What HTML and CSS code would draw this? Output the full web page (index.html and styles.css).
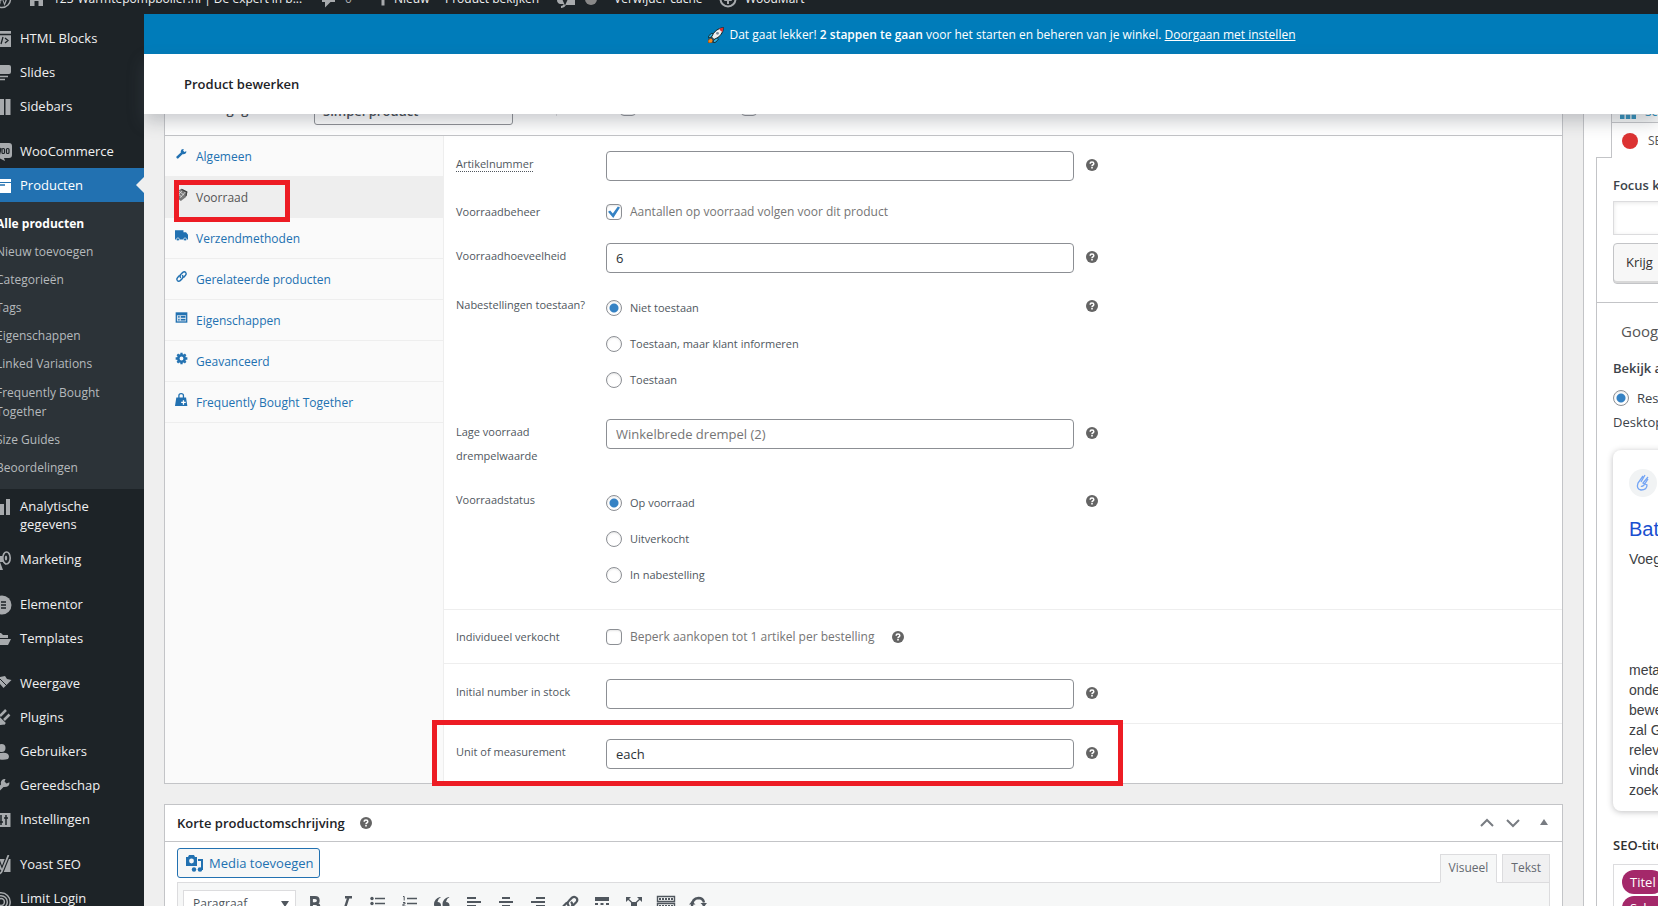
FILE: index.html
```html
<!DOCTYPE html>
<html lang="nl">
<head>
<meta charset="utf-8">
<title>Product bewerken</title>
<link rel="stylesheet" href="styles.css">
</head>
<body>
<svg class="defs" aria-hidden="true">
  <symbol id="help" viewBox="0 0 12 12"><circle cx="6" cy="6" r="6" fill="#646464"/><path d="M4.2 4.7Q4.2 3 6 3t1.8 1.6Q7.800 5.500 6.800 6 6 6.400 6 7.200" fill="none" stroke="#fff" stroke-width="1.500"/><rect x="5.200" y="8" width="1.600" height="1.500" fill="#fff"/></symbol>
  <symbol id="wrench" viewBox="0 0 20 20"><path d="M17 6.500 14.500 7.500 12.500 5.500 13.500 3Q9.500 2.500 8.800 6.500L9 8.500 2 15Q1.500 17.500 4.500 18L11.500 11Q17.500 11.500 17.500 6.500Z" fill="currentColor"/></symbol>
  <symbol id="link" viewBox="0 0 20 20"><g fill="none" stroke="currentColor" stroke-width="2.200" stroke-linecap="round"><path d="M8.500 11.500Q6.500 9 9 6.700L12 3.700Q14.500 1.800 16.500 4 18.200 6 16.200 8.200L13.500 11"/><path d="M11.500 8.500Q13.500 11 11 13.300L8 16.300Q5.500 18.200 3.500 16 1.800 14 3.800 11.800L6.500 9"/></g></symbol>
</svg>

<header class="adminbar">
  <a class="ab-logo" href="#" aria-label="WordPress"><svg width="12" height="20" viewBox="8 0 12 20"><circle cx="10" cy="10" r="8.500" fill="none" stroke="#a7aaad" stroke-width="1.500"/><path d="M3 6l4.500 11L10 10l2.500 7L17 6l-2 0-2.500 8L9.500 6H6l3 8Z" fill="#a7aaad"/></svg></a>
  <a class="ab-site" href="#"><svg width="13" height="20" viewBox="0 0 13 20"><path d="M0 2h13v15H8.500v-5h-4v5H0Z" fill="#a7aaad"/></svg>123-Warmtepompboiler.nl | De expert in b...</a>
  <a class="ab-comments" href="#"><svg width="13" height="20" viewBox="0 0 13 20"><path d="M0 3h13v10H8.500L3 18.500V13H0Z" fill="#a7aaad"/></svg><span>0</span></a>
  <a class="ab-new" href="#"><svg width="10" height="20" viewBox="0 0 10 20"><path d="M3.500 3h3v4H10v3H6.500v6.500h-3V10H0V7h3.500Z" fill="#a7aaad"/></svg>Nieuw</a>
  <a class="ab-view" href="#">Product bekijken</a>
  <a class="ab-yoast" href="#" aria-label="Yoast SEO"><svg width="18" height="20" viewBox="0 0 18 20"><path d="M0 4h18v12H9q-2 3.500-5 3v-2q2 0 2.800-2H3q-3-1-3-4Z" fill="#a7aaad"/><path d="M4 5l4 9 5-11" fill="none" stroke="#1d2327" stroke-width="2"/></svg><i></i></a>
  <a class="ab-cache" href="#">Verwijder cache</a>
  <a class="ab-wood" href="#"><svg width="18" height="20" viewBox="0 0 18 20"><circle cx="9" cy="10" r="7.500" fill="none" stroke="#a7aaad" stroke-width="2"/><path d="M9 3l4 9h-3v3H8v-3H5Z" fill="#a7aaad"/></svg>WoodMart</a>
</header>

<div class="shell">
  <nav class="menu">
    <a href="#"><svg viewBox="8 0 12 20"><path d="M1 2h18v16H1Z" fill="#a7aaad"/><path d="M1 5.500h18M7 9l-3 2.500L7 14M11 8l-2 7M13 9l3 2.500-3 2.500" stroke="#1d2327" fill="none" stroke-width="1.300"/></svg>HTML Blocks</a>
    <a href="#"><svg viewBox="8 0 12 20"><rect x="2" y="2" width="17" height="9" rx="2" fill="#a7aaad"/><path d="M4 13.500h12M4 16.500h9" stroke="#a7aaad" stroke-width="1.500"/></svg>Slides</a>
    <a href="#"><svg viewBox="8 0 12 20"><path d="M2 2h10v16H2ZM13.500 2h5v16h-5Z" fill="#a7aaad"/></svg>Sidebars</a>
    <a class="after-gap" href="#"><svg viewBox="8 0 12 20"><path d="M0 4q0-3 3-3h14q3 0 3 3v9q0 3-3 3h-5l1 3-6-3H3q-3 0-3-3Z" fill="#a7aaad"/><path d="M3 6l1.500 6L6 8l1.500 4L9 6" stroke="#1d2327" fill="none" stroke-width="1.500"/><rect x="10" y="6.500" width="2.500" height="5" rx="1" stroke="#1d2327" fill="none" stroke-width="1.200"/><rect x="14.500" y="6.500" width="2.500" height="5" rx="1" stroke="#1d2327" fill="none" stroke-width="1.200"/></svg>WooCommerce</a>
    <a class="current" href="#"><svg viewBox="8 0 12 20"><path d="M1 3h18v3H1ZM1 7h18v10H1Z" fill="#fff"/><path d="M6 9h7" stroke="#2271b1" stroke-width="1.500"/></svg>Producten</a>
    <div class="submenu">
      <a class="on" href="#">Alle producten</a>
      <a href="#">Nieuw toevoegen</a>
      <a href="#">Categorieën</a>
      <a href="#">Tags</a>
      <a href="#">Eigenschappen</a>
      <a href="#">Linked Variations</a>
      <a class="two-line" href="#">Frequently Bought Together</a>
      <a href="#">Size Guides</a>
      <a href="#">Beoordelingen</a>
    </div>
    <a class="tall" href="#"><svg viewBox="8 0 12 20"><path d="M2 11h4v7H2ZM8 7h4v11H8ZM14 2h4v16h-4Z" fill="#a7aaad"/></svg>Analytische gegevens</a>
    <a href="#"><svg viewBox="8 0 12 20"><path d="M3 6h8l3-4v13l-3-3H8l3 8H8L5 12H3Z" fill="#a7aaad"/><ellipse cx="14.500" cy="8" rx="3.700" ry="6" fill="#1d2327" stroke="#a7aaad" stroke-width="1.600"/><ellipse cx="14" cy="8" rx="1.200" ry="2.500" fill="#a7aaad"/></svg>Marketing</a>
    <a class="after-gap" href="#"><svg viewBox="8 0 12 20"><circle cx="10" cy="10" r="9.500" fill="#a7aaad"/><path d="M9 7h5M9 10h5M9 13h5" stroke="#1d2327" stroke-width="1.500"/></svg>Elementor</a>
    <a href="#"><svg viewBox="8 0 12 20"><path d="M2 4h7l2 2h5v3H2ZM2 10h17l-3 6H3Z" fill="#a7aaad"/></svg>Templates</a>
    <a class="after-gap" href="#"><svg viewBox="8 0 12 20"><path d="M8 3l5-1 2 3 4.500 1-8 8-6-7Z" fill="#a7aaad"/><path d="M8 5l7 7" stroke="#1d2327"/></svg>Weergave</a>
    <a href="#"><svg viewBox="8 0 12 20"><path d="M6 9l7 7q-5 2-9 0Z" fill="#a7aaad"/><path d="M8 8l6-6M12 12l5.500-5.500M6 9l7 7" stroke="#a7aaad" stroke-width="2.500"/></svg>Plugins</a>
    <a href="#"><svg viewBox="8 0 12 20"><circle cx="9.500" cy="6" r="4" fill="#a7aaad"/><path d="M3 16q0-6 6-5 8-1 8 4l-1 2q-6 2-13-1Z" fill="#a7aaad"/></svg>Gebruikers</a>
    <a href="#"><svg viewBox="8 0 12 20" color="#a7aaad"><use href="#wrench" x="0" y="0" width="20" height="20"/></svg>Gereedschap</a>
    <a href="#"><svg viewBox="8 0 12 20"><path d="M2 3h16.500v14H2Z" fill="#a7aaad"/><path d="M9 5v10M14 5v10M7 12h4M12 8h4" stroke="#1d2327" stroke-width="1.500"/></svg>Instellingen</a>
    <a class="after-gap" href="#"><svg viewBox="8 0 12 20"><path d="M1 4h17.500v13H1Z" fill="#a7aaad"/><path d="M16.500 0 10 16q-1 3-4 3M6 6l3.500 9" stroke="#1d2327" fill="none" stroke-width="4"/><path d="M16.500 0 10 16q-1 3-4 3M6 6l3.500 9" stroke="#a7aaad" fill="none" stroke-width="1.800"/></svg>Yoast SEO</a>
    <a href="#"><svg viewBox="8 0 12 20"><g fill="none" stroke="#a7aaad" stroke-width="1.500"><circle cx="9" cy="13" r="9.200"/><circle cx="9" cy="13" r="6.300"/><circle cx="9" cy="13" r="3.400"/></g></svg>Limit Login</a>
  </nav>

  <main class="main">
    <p class="banner"><svg width="16" height="16" viewBox="0 0 16 16"><path d="M4 6 1 8.500 0 11l4-1 2 2-1 4 3-1 2.500-3Z" fill="#31b5e8" stroke="#122" stroke-width=".8"/><path d="M3 11l2 2-1 3H0v-3Z" fill="#f58a1f" stroke="#422" stroke-width=".6"/><path d="M3.500 10Q7 1.500 15.500.500 15 9 6 12.500Z" fill="#eee" stroke="#122"/><path d="M11 1.700 15.500.500 14.300 5Q12.500 4 11 1.700Z" fill="#e02b2b"/><circle cx="9.500" cy="6.300" r="1.400" fill="#789"/></svg><span>Dat gaat lekker! <strong>2 stappen te gaan</strong> voor het starten en beheren van je winkel. <a href="#">Doorgaan met instellen</a></span></p>
    <div class="titlebar"><h1>Product bewerken</h1></div>

    <div class="content">
      <div class="primary">
        <section class="box">
          <div class="data-head">
            <label for="ptype">Productgegevens —</label>
            <select id="ptype"><option>Simpel product</option></select>
            <i class="bar"></i>
            <label class="virt">Virtueel: <input type="checkbox"></label>
            <label class="down">Downloadbaar: <input type="checkbox"></label>
          </div>
          <div class="data-body">
            <nav class="tabs">
              <a href="#"><svg viewBox="0 0 20 20"><use href="#wrench"/></svg>Algemeen</a>
              <a class="active" href="#"><svg viewBox="0 0 20 20"><path d="M1 6l9-5 9 5-2 8-8 6-8-6Z" fill="#777"/><path d="M3 8l8 6M6 5l8 6M3 13l8-9M8 15l8-9" stroke="#ddd" stroke-width="1.300"/><path d="M10 2l8 4-1 6" fill="none" stroke="#444" stroke-width="2"/></svg>Voorraad<span class="mark mark-tab"></span></a>
              <a href="#"><svg viewBox="0 0 20 20"><path d="M0 2h13v3h4l3 4v7H0Z" fill="currentColor"/><circle cx="4.500" cy="16" r="2.300" fill="currentColor" stroke="#fafafa"/><circle cx="15.500" cy="16" r="2.300" fill="currentColor" stroke="#fafafa"/></svg>Verzendmethoden</a>
              <a href="#"><svg viewBox="0 0 20 20"><use href="#link"/></svg>Gerelateerde producten</a>
              <a href="#"><svg viewBox="0 0 20 20"><path d="M1 2h18v16H1Z" fill="currentColor"/><path d="M3 6.500h14V16H3Z" fill="#fafafa" opacity=".8"/><path d="M9 9h7M9 13.500h7M5 9h2M5 13.500h2" stroke="currentColor" stroke-width="2.500"/></svg>Eigenschappen</a>
              <a href="#"><svg viewBox="0 0 20 20"><circle cx="10" cy="10" r="5" fill="none" stroke="currentColor" stroke-width="4"/><path d="M10 1v3M10 16v3M1 10h3M16 10h3M3.600 3.600l2 2M14.400 14.400l2 2M3.600 16.400l2-2M14.400 5.600l2-2" stroke="currentColor" stroke-width="3.500"/></svg>Geavanceerd</a>
              <a href="#"><svg viewBox="0 0 20 20"><path d="M2 7h15l2 13H0Z" fill="currentColor"/><path d="M6 8V4q0-3 3.500-3T13 4v4" fill="none" stroke="currentColor" stroke-width="2"/><path d="M13 11v7M9.500 14.500h7" stroke="#fff" stroke-width="2"/></svg>Frequently Bought Together</a>
            </nav>
            <form class="fields">
              <div class="group first">
                <div class="row"><label for="sku"><abbr>Artikelnummer</abbr></label><div><input class="text" id="sku" type="text"><svg class="help"><use href="#help"/></svg></div></div>
                <div class="row check"><span class="lab">Voorraadbeheer</span><div><label><input type="checkbox" checked><span class="desc">Aantallen op voorraad volgen voor dit product</span></label></div></div>
                <div class="row"><label for="qty">Voorraadhoeveelheid</label><div><input class="text" id="qty" type="text" value="6"><svg class="help"><use href="#help"/></svg></div></div>
                <div class="row choices"><span class="lab">Nabestellingen toestaan?</span><div><div class="list">
                  <label><input type="radio" name="back" checked>Niet toestaan</label>
                  <label><input type="radio" name="back">Toestaan, maar klant informeren</label>
                  <label><input type="radio" name="back">Toestaan</label></div><svg class="help"><use href="#help"/></svg></div></div>
                <div class="row low"><label for="low">Lage voorraad drempelwaarde</label><div><input class="text" id="low" type="text" placeholder="Winkelbrede drempel (2)"><svg class="help"><use href="#help"/></svg></div></div>
                <div class="row choices"><span class="lab">Voorraadstatus</span><div><div class="list">
                  <label><input type="radio" name="status" checked>Op voorraad</label>
                  <label><input type="radio" name="status">Uitverkocht</label>
                  <label><input type="radio" name="status">In nabestelling</label></div><svg class="help"><use href="#help"/></svg></div></div>
              </div>
              <div class="group solo">
                <div class="row check"><span class="lab">Individueel verkocht</span><div><label><input type="checkbox"><span class="desc">Beperk aankopen tot 1 artikel per bestelling</span></label><svg class="help"><use href="#help"/></svg></div></div>
              </div>
              <div class="group one">
                <div class="row"><label for="init">Initial number in stock</label><div><input class="text" id="init" type="text"><svg class="help"><use href="#help"/></svg></div></div>
              </div>
              <div class="group one">
                <div class="row"><label for="unit">Unit of measurement</label><div><input class="text" id="unit" type="text" value="each"><svg class="help"><use href="#help"/></svg></div></div>
                <span class="mark mark-unit"></span>
              </div>
            </form>
          </div>
        </section>

        <section class="box">
          <div class="box-head">
            <h2>Korte productomschrijving</h2><svg class="help"><use href="#help"/></svg>
            <div class="handles">
              <button type="button" aria-label="Omhoog"><svg width="14" height="10" viewBox="0 0 14 10"><path d="M1 8l6-6 6 6" fill="none" stroke="#787c82" stroke-width="2"/></svg></button>
              <button type="button" aria-label="Omlaag"><svg width="14" height="10" viewBox="0 0 14 10"><path d="M1 2l6 6 6-6" fill="none" stroke="#787c82" stroke-width="2"/></svg></button>
              <button class="fold" type="button" aria-label="Inklappen"><svg width="8" height="10" viewBox="0 0 8 10"><path d="M4 1l4 6H0Z" fill="#787c82"/></svg></button>
            </div>
          </div>
          <div class="editor">
            <div class="editor-top">
              <button class="media" type="button"><svg width="17" height="17" viewBox="0 0 17 17"><path d="M0 2h2l1-2h5l1 2h2v9H0Z" fill="currentColor"/><circle cx="5.500" cy="6" r="2.400" fill="#f6f7f7"/><path d="M12 5h4v10" fill="none" stroke="currentColor" stroke-width="2"/><circle cx="14" cy="14.500" r="2.300" fill="currentColor"/><circle cx="8" cy="14.500" r="2.200" fill="currentColor"/></svg>Media toevoegen</button>
              <div class="modes"><button class="on" type="button">Visueel</button><button type="button">Tekst</button></div>
            </div>
            <div class="toolbar">
              <div class="format"><select aria-label="Opmaak"><option>Paragraaf</option></select></div>
              <button type="button" aria-label="Vet"><svg viewBox="0 0 20 20"><path d="M6 3.500h5q3.300 0 3.300 3T11 9.700H7.500M7.500 9.700H11q4 0 4 3.400T11 16.500H6M7.500 3v14" fill="none" stroke="currentColor" stroke-width="2.800"/></svg></button>
              <button type="button" aria-label="Cursief"><svg viewBox="0 0 20 20"><path d="M9 3.200h7M4 16.800h7M12.500 3 8 17" stroke="currentColor" stroke-width="2.400"/></svg></button>
              <button type="button" aria-label="Lijst"><svg viewBox="0 0 20 20"><path d="M7 4.500H17M7 9.500H17M7 14.500H17" stroke="currentColor" stroke-width="1.300"/><circle cx="4" cy="4.500" r="1.700" fill="currentColor"/><circle cx="4" cy="9.500" r="1.700" fill="currentColor"/></svg></button>
              <button type="button" aria-label="Genummerde lijst"><svg viewBox="0 0 20 20"><path d="M7 4.500H17M7 9.500H17M7 14.500H17" stroke="currentColor" stroke-width="1.300"/><path d="M3 2.500h1.200v4M3 8.500h2v1.500H3v2h2.500" fill="none" stroke="currentColor"/></svg></button>
              <button type="button" aria-label="Citaat"><svg viewBox="0 0 20 20"><path d="M9 3Q6 4.500 5.500 8 9 8 9 11.500 9 15 5.500 15 2 14.500 2 10 2.500 4.500 8 3ZM17.500 3Q14.500 4.500 14 8q3.500 0 3.500 3.500 0 3.500-3.500 3.500-3.500-.5-3.500-5 .5-5.500 6-7Z" fill="currentColor"/></svg></button>
              <button type="button" aria-label="Links"><svg viewBox="0 0 20 20"><path d="M3 4h9M3 8h14M3 12h9M3 16h14" stroke="currentColor" stroke-width="2"/></svg></button>
              <button type="button" aria-label="Midden"><svg viewBox="0 0 20 20"><path d="M6 4h8M3 8h14M6 12h8M3 16h14" stroke="currentColor" stroke-width="2"/></svg></button>
              <button type="button" aria-label="Rechts"><svg viewBox="0 0 20 20"><path d="M8 4h9M3 8h14M8 12h9M3 16h14" stroke="currentColor" stroke-width="2"/></svg></button>
              <button type="button" aria-label="Link"><svg viewBox="0 0 20 20"><use href="#link"/></svg></button>
              <button type="button" aria-label="Lees meer"><svg viewBox="0 0 20 20"><path d="M3 3h14v4H3ZM3 9h3v2H3ZM8.500 9h3v2h-3ZM14 9h3v2h-3ZM3 13h14v4H3Z" fill="currentColor"/></svg></button>
              <button type="button" aria-label="Volledig scherm"><svg viewBox="0 0 20 20"><path d="M7 8h6v5H7ZM2 3h5L2 8ZM18 3v5l-5-5ZM2 18v-5l5 5ZM18 18h-5l5-5Z" fill="currentColor"/><path d="M3 4l14 13M17 4 3 17" stroke="currentColor" stroke-width="1.300"/></svg></button>
              <button type="button" aria-label="Werkbalk"><svg viewBox="0 0 20 20"><path d="M1.500 2.500h17v5h-17ZM1.500 9.500h17v8h-17Z" fill="none" stroke="currentColor" stroke-width="1.400"/><path d="M3 5h14M3 12h14" stroke="currentColor" stroke-width="2" stroke-dasharray="2 1"/></svg></button>
              <button type="button" aria-label="Vernieuwen"><svg viewBox="0 0 20 20"><path d="M4 12Q4 4.500 10.500 4 15 4 16 8.500M16 10q0 6-6 6.500-4 0-6-3.500" fill="none" stroke="currentColor" stroke-width="2.400"/><path d="M1 10.500h6.500L4 7ZM12.500 9h6.500l-3 3.500Z" fill="currentColor"/></svg></button>
            </div>
          </div>
        </section>
      </div>

      <aside class="side">
        <div class="seo-tabs">
          <a class="schema" href="#"><svg width="16" height="14" viewBox="0 0 16 14"><path d="M0 0h4.500v14H0ZM5.800 0h4.500v14H5.800ZM11.500 0H16v14h-4.500Z" fill="#2b8cb8"/><path d="M0 9.200h16" stroke="#fff"/></svg>Schema</a>
          <a class="seo" href="#"><i></i>SEO</a>
        </div>
        <div class="seo-body">
          <div class="focus">
            <label for="focus">Focus k</label>
            <input id="focus" type="text">
            <button type="button">Krijg</button>
          </div>
          <div class="preview">
            <h3>Google</h3>
            <strong>Bekijk als</strong>
            <label><input type="radio" name="pv" checked>Resultaat</label>
            <span class="desktop">Desktop</span>
            <div class="card">
              <span class="favicon"><svg width="14" height="18" viewBox="0 0 14 18"><path d="M7 2 2 9q-2 6 3 7 6 0 6-5L7 9l5-6M9 1 5 8M12 5 8 11q-2 2-3 1" fill="none" stroke="#74a5f5" stroke-width="1.300"/></svg></span>
              <a href="#">Bat</a>
              <span class="date">Voeg</span>
              <p>meta<br>onde<br>bewe<br>zal G<br>relev<br>vinde<br>zoek</p>
            </div>
            <strong class="seo-title">SEO-titel</strong>
            <div class="pills"><span>Titel</span><span>Scheiding</span></div>
          </div>
        </div>
      </aside>
    </div>
  </main>
</div>
</body>
</html>
```
FILE: styles.css
```css
* { box-sizing: border-box; }
body {
  margin: 0;
  height: 100vh;
  overflow: hidden;
  display: flex;
  flex-direction: column;
  background: #efefef;
  color: #3c434a;
  font: 13px/18px "Open Sans", "Noto Sans", sans-serif;
}
h1, h2, h3, p { margin: 0; }
a { color: #2271b1; text-decoration: none; }
button, input, select { font: inherit; color: inherit; margin: 0; }
button { padding: 0; border: 0; background: none; }
.defs { position: absolute; width: 0; height: 0; }
.help { width: 12px; height: 12px; flex: none; }

/* admin bar */
.adminbar {
  flex: none;
  height: 14px;
  overflow: hidden;
  display: flex;
  align-items: flex-end;
  background: #1d2327;
  font-size: 12px;
  white-space: nowrap;
}
.adminbar a { flex: none; display: flex; align-items: center; height: 30px; color: #f0f0f1; }
.adminbar span { color: #a7aaad; }
.ab-logo { width: 30px; }
.ab-site { width: 292px; gap: 10px; }
.ab-comments { width: 56px; gap: 10px; }
.ab-new { width: 67px; gap: 6px; }
.ab-view { width: 112px; }
.ab-yoast { width: 57px; gap: 10px; }
.ab-yoast i { width: 12px; height: 12px; border-radius: 50%; background: #888; }
.ab-cache { width: 105px; }
.ab-wood { gap: 8px; }

.shell { flex: 1; min-height: 0; display: flex; }

/* left menu */
.menu { flex: none; width: 144px; padding-top: 7px; overflow: hidden; background: #1d2327; }
.menu > a {
  position: relative;
  display: flex;
  align-items: flex-start;
  gap: 8px;
  padding: 8px 24px 8px 0;
  color: #f0f0f1;
}
.menu > a svg { flex: none; width: 12px; height: 20px; margin-bottom: -2px; }
.menu > a.after-gap { margin-top: 11px; }
.menu > a.current { background: #2271b1; color: #fff; }
.menu > a.current::after {
  content: "";
  position: absolute;
  right: 0;
  top: 9px;
  border: 8px solid transparent;
  border-left: 0;
  border-right-color: #efefef;
}
.menu > a.tall { padding-bottom: 9px; }
.submenu { padding: 8px 0 7px; background: #2c3338; }
.submenu a { display: block; margin-left: -4px; padding: 5px 20px 5px 0; font-size: 12px; color: #b6babd; }
.submenu a.two-line { line-height: 19px; }
.submenu a.on { color: #fff; font-weight: 700; }

/* header */
.main { flex: 1; min-width: 0; display: flex; flex-direction: column; }
.banner {
  flex: none;
  height: 40px;
  padding: 2px 0 0 202px;
  display: flex;
  align-items: center;
  justify-content: center;
  gap: 5px;
  background: #007cba;
  color: #fff;
  font-size: 12px;
  white-space: nowrap;
}
.banner a { color: #fff; text-decoration: underline; }
.banner strong { font-weight: 600; }
.titlebar {
  flex: none;
  position: relative;
  z-index: 2;
  height: 60px;
  padding: 0 40px;
  display: flex;
  align-items: center;
  background: #fff;
  box-shadow: 0 8px 16px rgba(85, 93, 102, .3);
}
.titlebar h1 { font-size: 13px; line-height: 18px; font-weight: 600; color: #1d2327; }

.content {
  flex: 1;
  min-height: 0;
  overflow: hidden;
  padding-left: 20px;
  display: grid;
  grid-template-columns: minmax(0, 1fr) 75px;
  column-gap: 20px;
}
.primary { display: flex; flex-direction: column; gap: 20px; }
.box { flex: none; border: 1px solid #c3c4c7; background: #fff; }
.box:first-child { border-top: 0; }

/* product data */
.data-head {
  height: 22px;
  overflow: hidden;
  display: flex;
  align-items: flex-end;
  padding: 0 12px 10px;
  border-bottom: 1px solid #c3c4c7;
  font-weight: 600;
}
.data-head > label { width: 137px; flex: none; height: 25px; white-space: nowrap; }
.data-head select {
  flex: none;
  width: 199px;
  height: 30px;
  padding: 2px 8px 0;
  appearance: none;
  border: 1px solid #8c8f94;
  border-radius: 3px;
  background: #fff;
  font-weight: 600;
}
.data-head .bar { flex: none; height: 20px; margin: 0 0 9px 43px; border-left: 1px solid #dcdcde; }
.data-head > .virt, .data-head > .down { display: flex; align-items: center; justify-content: flex-end; gap: 6px; font-size: 12px; font-weight: 400; height: 34px; }
.data-head > .virt { width: 79px; }
.data-head > .down { width: 121px; }
.data-body { display: grid; grid-template-columns: 279px minmax(0, 1fr); }
.tabs { background: #fafafa; border-right: 1px solid #eee; }
.tabs a {
  position: relative;
  display: flex;
  gap: 8px;
  height: 41px;
  padding: 11px 10px 9px;
  border-bottom: 1px solid #eee;
  font-size: 12px;
  line-height: 20px;
}
.tabs svg { width: 13px; height: 13px; }
.tabs .active { background: #eee; color: #555; }
.mark { position: absolute; z-index: 1; border: 5px solid #ed1c24; pointer-events: none; }
.mark-tab { left: 9px; top: 3px; width: 116px; height: 42px; }
.mark-unit { left: -12px; top: -4px; width: 691px; height: 66px; }

/* form rows */
.fields { font-size: 11px; line-height: 24px; color: #50575e; }
.group { position: relative; padding: 15px 20px 14px 12px; display: grid; row-gap: 23px; border-top: 1px solid #eee; }
.group.first { border-top: 0; padding-bottom: 18px; }
.group.solo { padding-top: 19px; padding-bottom: 18px; }
.row { display: grid; grid-template-columns: 150px minmax(0, 1fr); }
.row > div { display: flex; align-items: flex-start; gap: 12px; }
.row > div > .help { margin-top: 8px; }
.row abbr { border-bottom: 1px dotted #50575e; }
.row > label { padding-top: 1px; }
.text {
  width: 50%;
  height: 30px;
  padding: 0 9px;
  border: 1px solid #8c8f94;
  border-radius: 4px;
  background: #fff;
  font-size: 13px;
  color: #2c3338;
}
.text::placeholder { color: #757575; opacity: 1; }
.row.check { grid-template-rows: 16px; align-items: center; }
.row.check > div { align-items: center; }
.check label, .list label, .preview label { display: flex; align-items: center; gap: 8px; }
.row.check > div > .help { margin: 0 0 0 5px; }
.desc { font-size: 12px; color: #757575; white-space: nowrap; }
.list { width: 50%; display: grid; row-gap: 20px; padding-top: 4px; }
.list label { height: 16px; }
.choices { padding-bottom: 8px; }
.choices .lab { line-height: 18px; }
.row.choices > div > .help { margin-top: 4px; }
.row.low { min-height: 48px; }

input[type="checkbox"], input[type="radio"] {
  appearance: none;
  flex: none;
  width: 16px;
  height: 16px;
  border: 1px solid #8c8f94;
  border-radius: 4px;
  background: #fff;
  box-shadow: inset 0 1px 2px rgba(0, 0, 0, .1);
}
input[type="radio"] { border-radius: 50%; }
input[type="radio"]:checked { background: radial-gradient(circle, #3582c4 4px, #fff 5px); }
input[type="checkbox"]:checked { display: grid; place-items: center; }
input[type="checkbox"]:checked::before {
  content: "";
  width: 12px;
  height: 12px;
  background: #3582c4;
  clip-path: polygon(0 48%, 18% 38%, 40% 62%, 82% 4%, 100% 12%, 44% 100%);
}

/* short description */
.box-head { height: 37px; display: flex; align-items: center; padding: 0 14px 0 12px; border-bottom: 1px solid #c3c4c7; }
.box-head h2 { font-size: 13px; line-height: 18px; font-weight: 600; color: #1d2327; margin-right: 15px; }
.handles { margin-left: auto; display: flex; gap: 12px; }
.handles button { display: flex; }
.handles .fold { margin-left: 8px; }
.editor { padding: 6px 12px 0; }
.editor-top { display: flex; justify-content: space-between; align-items: flex-start; height: 34px; }
.media {
  height: 30px;
  padding: 0 5px 0 8px;
  display: flex;
  align-items: center;
  gap: 6px;
  border: 1px solid #2271b1;
  border-radius: 3px;
  background: #f6f7f7;
  color: #2271b1;
  font-size: 13px;
}
.modes { position: relative; display: flex; gap: 5px; padding-top: 6px; }
.modes button { height: 29px; padding: 0 8px 2px; border: 1px solid #dcdcde; background: #f0f0f1; color: #646970; font-size: 12px; }
.modes .on { border-bottom-color: #f6f7f7; background: #f6f7f7; }
.toolbar {
  height: 40px;
  display: flex;
  align-items: flex-start;
  padding: 7px 5px;
  border: 1px solid #dcdcde;
  background: #f6f7f7;
  color: #50575e;
}
.format { position: relative; width: 113px; margin-right: 2px; }
.format select { width: 100%; height: 28px; padding: 0 9px; appearance: none; border: 1px solid #dcdcde; border-radius: 0; background: #fff; font-size: 12px; }
.format::after { content: ""; position: absolute; right: 7px; top: 11px; border: 4px solid transparent; border-top: 6px solid #50575e; border-bottom: 0; }
.toolbar button { width: 32px; height: 28px; display: grid; place-items: center; }
.toolbar button svg { width: 20px; height: 20px; }

/* seo column */
.side { width: 280px; padding-left: 12px; border-left: 1px solid #c3c4c7; background: #fff; white-space: nowrap; }
.seo-tabs { position: relative; margin: 0 0 -1px 15px; border-left: 1px solid #c3c4c7; background: #fff; }
.seo-tabs a { display: flex; align-items: center; }
.seo-tabs .schema { height: 9px; padding: 0 8px 3px; gap: 9px; align-items: flex-end; overflow: hidden; border-bottom: 1px solid #c3c4c7; background: #f6f7f7; color: #2b8cb8; font-size: 12px; line-height: 14px; }
.seo-tabs .schema svg { flex: none; }
.seo-tabs .seo { height: 35px; padding: 0 10px; gap: 10px; font-size: 12px; color: #555; }
.seo i { width: 16px; height: 16px; border-radius: 50%; background: #dc3232; }
.seo-body { border: 1px solid #c3c4c7; height: 100%; }
.focus { height: 145px; padding: 18px 16px 0; display: grid; justify-items: start; align-content: start; border-bottom: 1px solid #c3c4c7; }
.focus label, .side strong { font-size: 13px; font-weight: 600; color: #3c434a; }
.focus input { width: 230px; height: 34px; margin: 7px 0 8px; border: 1px solid #dcdcde; box-shadow: inset 0 1px 4px rgba(10, 10, 10, .1); }
.focus button { width: 230px; height: 41px; padding: 0 12px 4px; text-align: left; border: 1px solid #c3c4c7; border-radius: 4px; background: #f7f7f7; box-shadow: inset 0 -2px 0 #d8d8d8; color: #303030; }
.preview { padding: 18px 16px 0; display: flex; flex-direction: column; align-items: flex-start; }
.preview h3 { padding-left: 8px; font-size: 15px; line-height: 20px; font-weight: 400; color: #555; }
.preview > strong { margin-top: 18px; }
.preview > label { margin-top: 12px; }
.preview .desktop { margin-top: 6px; }
.card { width: 240px; height: 361px; margin-top: 19px; padding: 19px 16px 8px; border-radius: 8px; box-shadow: 0 1px 6px rgba(32, 33, 36, .28); font: 14px/20px "Liberation Sans", sans-serif; color: #3c4043; display: flex; flex-direction: column; }
.favicon { flex: none; width: 28px; height: 28px; display: grid; place-items: center; border-radius: 50%; background: #f1f3f4; }
.card a { margin-top: 19px; font-size: 20px; line-height: 26px; color: #1a4fd0; }
.card .date { margin-top: 7px; }
.card p { margin-top: 91px; }
.preview > .seo-title { margin-top: 25px; color: #303030; }
.pills { width: 240px; margin-top: 10px; padding: 5px 8px; border: 1px solid #dcdcde; display: grid; justify-items: start; gap: 2px; }
.pills span { padding: 3px 8px; border-radius: 12px; background: #a4286a; color: #fff; }
```
